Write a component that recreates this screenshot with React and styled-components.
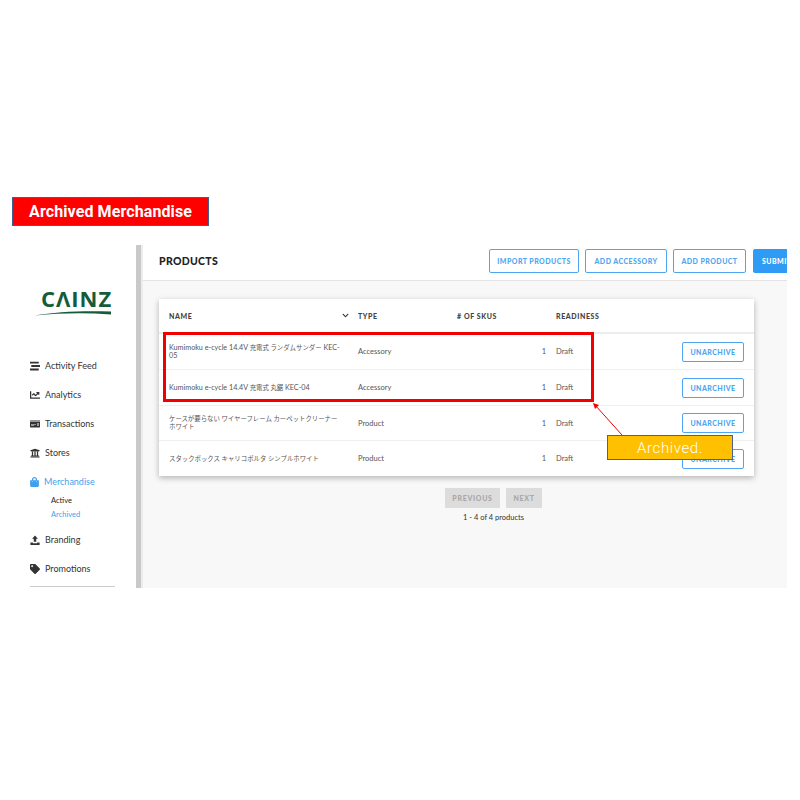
import React from 'react';
import styled, { createGlobalStyle } from 'styled-components';
import {
  FaStream,
  FaChartLine,
  FaMoneyCheck,
  FaUniversity,
  FaShoppingBag,
  FaTag,
  FaChevronDown,
} from 'react-icons/fa';

const GlobalStyle = createGlobalStyle`
  html, body {
    margin: 0;
    padding: 0;
    background: #fff;
  }
  body {
    font-family: Lato, "Noto Sans CJK JP", "Liberation Sans", sans-serif;
    color: #333;
  }
`;

const Page = styled.div`
  width: 800px;
  height: 800px;
  padding-top: 197px;
  box-sizing: border-box;
  overflow: hidden;
`;

const Banner = styled.div`
  width: 197px;
  height: 29px;
  margin-left: 12px;
  box-sizing: border-box;
  border: 1px solid #3f5f94;
  background: #ff0000;
  color: #fff;
  font-family: Roboto, "Liberation Sans", sans-serif;
  font-size: 16px;
  font-weight: 700;
  line-height: 27px;
  text-align: center;
  letter-spacing: 0.1px;
`;

const Screen = styled.div`
  position: relative;
  display: flex;
  width: 787px;
  height: 343px;
  margin-top: 19px;
  overflow: hidden;
`;

const Sidebar = styled.nav`
  width: 136px;
  flex: none;
  padding-left: 30px;
  box-sizing: border-box;
`;

const Logo = styled.div`
  width: 76px;
  margin: 43px 0 35px 5px;
  color: #155c3a;
`;

const LogoWord = styled.div`
  font-family: "Open Sans", "Liberation Sans", sans-serif;
  font-size: 22px;
  font-weight: 700;
  line-height: 20px;
  letter-spacing: 1px;
  text-align: center;
  padding-left: 6px;
`;

const Swoosh = styled.svg`
  display: block;
  width: 76px;
  height: 6px;
  margin-top: 2px;
`;

const NavItem = styled.div`
  display: flex;
  align-items: center;
  height: 29px;
  gap: 5px;
  color: ${({ $active }) => ($active ? '#3f9fee' : '#333')};
  font-size: 9px;

  svg {
    width: ${({ $active }) => ($active ? '9px' : '10px')};
    height: 10px;
    flex: none;
  }
`;

const SubList = styled.div`
  display: flex;
  flex-direction: column;
  gap: 6px;
  margin: 1px 0 6px 21px;
`;

const SubItem = styled.div`
  font-size: 7.5px;
  line-height: 8px;
  color: ${({ $active }) => ($active ? '#3f9fee' : '#222')};
`;

const SideRule = styled.div`
  width: 85px;
  height: 1px;
  margin-top: 3px;
  background: #ccc;
`;

const Divider = styled.div`
  width: 7px;
  flex: none;
  box-sizing: border-box;
  background: #c9c9c9;
  border-right: 2px solid #ececec;
`;

const Main = styled.main`
  flex: 1;
  min-width: 0;
  display: flex;
  flex-direction: column;
  background: #f8f8f8;
`;

const TopBar = styled.header`
  display: flex;
  align-items: flex-start;
  height: 36px;
  flex: none;
  box-sizing: border-box;
  padding: 4px 0 0 16px;
  background: #fff;
  border-bottom: 1px solid #e4e4e4;
`;

const Title = styled.h1`
  margin: 0;
  flex: 1;
  font-size: 10.5px;
  font-weight: 900;
  line-height: 24px;
  letter-spacing: 0.3px;
  color: #222;
`;

const TopActions = styled.div`
  display: flex;
  gap: 6px;
  flex: none;
  width: 298px;
`;

const OutlineButton = styled.button`
  flex: none;
  width: ${({ $w }) => $w}px;
  height: ${({ $h }) => $h || 24}px;
  padding: 0;
  box-sizing: border-box;
  border: 1px solid #4ea6f1;
  border-radius: 2px;
  background: #fff;
  color: #4ea6f1;
  font-family: inherit;
  font-size: 7px;
  font-weight: 900;
  letter-spacing: 0.45px;
`;

const SolidButton = styled(OutlineButton)`
  background: #2f9bf4;
  border-color: #2f9bf4;
  color: #fff;
  text-align: left;
  padding-left: 8px;
  margin-left: 1px;
`;

const Content = styled.div`
  padding: 18px 33px 0 16px;
  display: flex;
  flex-direction: column;
`;

const Card = styled.section`
  background: #fff;
  box-shadow: 0 2px 6px rgba(0, 0, 0, 0.28);
`;

const Row = styled.div`
  display: grid;
  grid-template-columns: 189px 99px 99px 1fr auto;
  align-items: center;
  height: ${({ $h }) => $h}px;
  box-sizing: border-box;
  padding: 0 10px;
  border-bottom: 1px solid #f0f0f0;
  font-size: 7.5px;
  color: #555;

  &:last-child {
    border-bottom: 0;
  }
`;

const HeadRow = styled(Row)`
  border-bottom: 2px solid #ececec;
  font-size: 7px;
  font-weight: 900;
  letter-spacing: 0.6px;
  color: #444;
`;

const NameHead = styled.div`
  display: flex;
  justify-content: space-between;
  align-items: center;
  padding-right: 9px;

  svg {
    width: 7px;
    height: 7px;
    color: #333;
  }
`;

const NameCell = styled.div`
  padding-right: 13px;
  font-size: 7.2px;
  line-height: 8px;
`;

const Jp = styled.span`
  font-size: 6.4px;
`;

const CountCell = styled.div`
  text-align: right;
  padding-right: 10px;
`;

const Footer = styled.div`
  padding-left: 74px;
`;

const Pager = styled.div`
  display: flex;
  justify-content: center;
  gap: 6px;
  margin-top: 12px;
`;

const PagerButton = styled.button`
  width: ${({ $w }) => $w}px;
  height: 20px;
  padding: 0;
  border: 0;
  border-radius: 1px;
  background: #dcdcdc;
  color: #a8a8a8;
  font-family: inherit;
  font-size: 7px;
  font-weight: 900;
  letter-spacing: 0.7px;
`;

const PageCount = styled.div`
  margin-top: 5px;
  text-align: center;
  font-size: 7.5px;
  line-height: 10px;
  color: #333;
`;

const Highlight = styled.div`
  position: absolute;
  left: 163px;
  top: 87px;
  width: 431px;
  height: 70px;
  box-sizing: border-box;
  border: 3px solid #f00000;
`;

const ArrowLayer = styled.svg`
  position: absolute;
  left: 590px;
  top: 155px;
  width: 36px;
  height: 38px;
`;

const Callout = styled.div`
  position: absolute;
  left: 607px;
  top: 190px;
  width: 126px;
  height: 25px;
  box-sizing: border-box;
  border: 1px solid #4b6388;
  background: #ffc000;
  color: #fff;
  font-family: Roboto, "Liberation Sans", sans-serif;
  font-size: 15px;
  font-weight: 300;
  line-height: 24px;
  text-align: center;
  letter-spacing: 0.6px;
`;

const BrandingIcon = () => (
  <svg viewBox="0 0 24 24" fill="currentColor">
    <path d="M12 1 L19 9 H15 V16 H9 V9 H5 Z" />
    <path d="M1 18 H7 V20 H17 V18 H23 V24 H1 Z" />
  </svg>
);

const navTop = [
  { label: 'Activity Feed', icon: <FaStream /> },
  { label: 'Analytics', icon: <FaChartLine /> },
  { label: 'Transactions', icon: <FaMoneyCheck /> },
  { label: 'Stores', icon: <FaUniversity /> },
];

const products = [
  {
    name: (
      <>
        Kumimoku e-cycle 14.4V <Jp>充電式 ランダムサンダー</Jp> KEC-05
      </>
    ),
    key: 'kec-05',
    type: 'Accessory',
    h: 36,
  },
  {
    name: (
      <>
        Kumimoku e-cycle 14.4V <Jp>充電式 丸鋸</Jp> KEC-04
      </>
    ),
    key: 'kec-04',
    type: 'Accessory',
    h: 36,
  },
  { name: <Jp>ケースが要らない ワイヤーフレーム カーペットクリーナー ホワイト</Jp>, key: 'case', type: 'Product', h: 35 },
  { name: <Jp>スタックボックス キャリコボルタ シンプルホワイト</Jp>, key: 'stack', type: 'Product', h: 35 },
];

const App = () => (
  <Page>
    <GlobalStyle />
    <Banner>Archived Merchandise</Banner>
    <Screen>
      <Sidebar>
        <Logo>
          <LogoWord>CΛINZ</LogoWord>
          <Swoosh viewBox="0 0 76 6">
            <path d="M0 5.5 C20 1.5 50 0.5 76 1.5 L76 4.5 C50 2.5 25 3 0 5.5 Z" fill="currentColor" />
          </Swoosh>
        </Logo>
        {navTop.map((item) => (
          <NavItem key={item.label}>
            {item.icon}
            {item.label}
          </NavItem>
        ))}
        <NavItem $active>
          <FaShoppingBag />
          Merchandise
        </NavItem>
        <SubList>
          <SubItem>Active</SubItem>
          <SubItem $active>Archived</SubItem>
        </SubList>
        <NavItem>
          <BrandingIcon />
          Branding
        </NavItem>
        <NavItem>
          <FaTag />
          Promotions
        </NavItem>
        <SideRule />
      </Sidebar>
      <Divider />
      <Main>
        <TopBar>
          <Title>PRODUCTS</Title>
          <TopActions>
            <OutlineButton $w={90}>IMPORT PRODUCTS</OutlineButton>
            <OutlineButton $w={82}>ADD ACCESSORY</OutlineButton>
            <OutlineButton $w={73}>ADD PRODUCT</OutlineButton>
            <SolidButton $w={60}>SUBMIT</SolidButton>
          </TopActions>
        </TopBar>
        <Content>
          <Card>
            <HeadRow $h={35}>
              <NameHead>
                NAME
                <FaChevronDown />
              </NameHead>
              <div>TYPE</div>
              <div># OF SKUS</div>
              <div>READINESS</div>
              <div />
            </HeadRow>
            {products.map((p) => (
              <Row key={p.key} $h={p.h}>
                <NameCell>{p.name}</NameCell>
                <div>{p.type}</div>
                <CountCell>1</CountCell>
                <div>Draft</div>
                <OutlineButton $w={62} $h={20}>UNARCHIVE</OutlineButton>
              </Row>
            ))}
          </Card>
          <Footer>
            <Pager>
              <PagerButton $w={55}>PREVIOUS</PagerButton>
              <PagerButton $w={36}>NEXT</PagerButton>
            </Pager>
            <PageCount>1 - 4 of 4 products</PageCount>
          </Footer>
        </Content>
      </Main>
      <Highlight />
      <ArrowLayer viewBox="0 0 36 38">
        <line x1="32" y1="35" x2="5" y2="5" stroke="#f00000" strokeWidth="1" />
        <polygon points="3,3 9,5 5,9" fill="#f00000" />
      </ArrowLayer>
      <Callout>Archived.</Callout>
    </Screen>
  </Page>
);

export default App;
